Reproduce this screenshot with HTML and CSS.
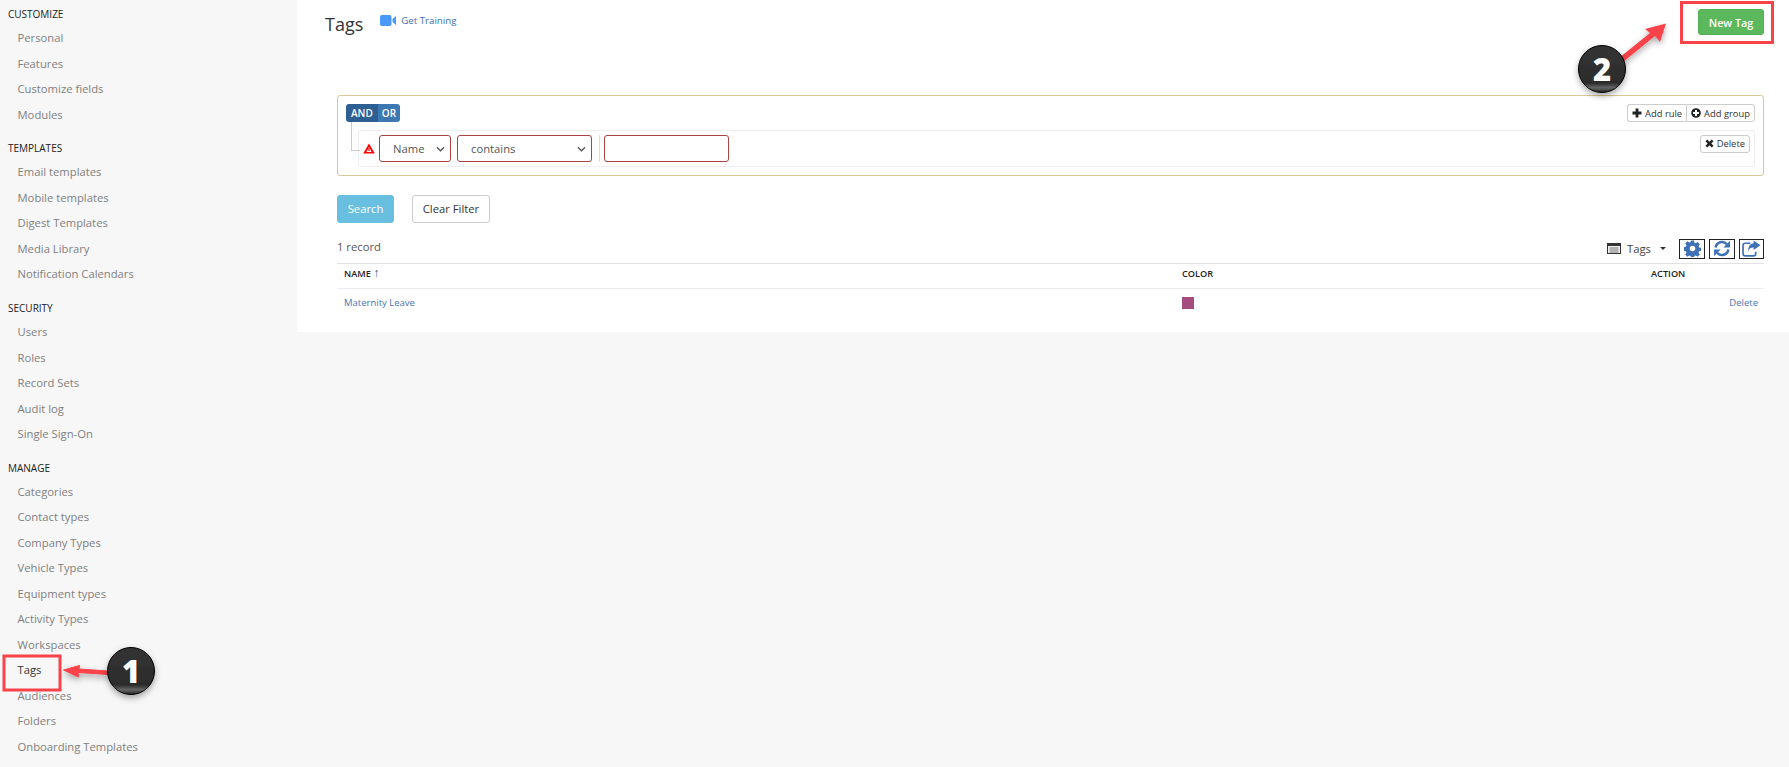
FILE: index.html
```html
<!DOCTYPE html>
<html lang="en">
<head>
<meta charset="utf-8">
<title>Tags</title>
<link rel="stylesheet" href="styles.css">
</head>
<body>
<div class="page">
  <nav class="sidebar">
    <section class="nav-group">
      <h4>CUSTOMIZE</h4>
      <a>Personal</a><a>Features</a><a>Customize fields</a><a>Modules</a>
    </section>
    <section class="nav-group">
      <h4>TEMPLATES</h4>
      <a>Email templates</a><a>Mobile templates</a><a>Digest Templates</a><a>Media Library</a><a>Notification Calendars</a>
    </section>
    <section class="nav-group">
      <h4>SECURITY</h4>
      <a>Users</a><a>Roles</a><a>Record Sets</a><a>Audit log</a><a>Single Sign-On</a>
    </section>
    <section class="nav-group">
      <h4>MANAGE</h4>
      <a>Categories</a><a>Contact types</a><a>Company Types</a><a>Vehicle Types</a><a>Equipment types</a><a>Activity Types</a><a>Workspaces</a><a class="current">Tags</a><a>Audiences</a><a>Folders</a><a>Onboarding Templates</a>
    </section>
  </nav>
  <main class="panel">
    <header class="head">
      <div class="head-left">
        <h1>Tags</h1>
        <a class="training">
          <svg class="cam" viewBox="0 0 16 11" width="16" height="11"><rect x="0" y="0" width="11.5" height="11" rx="2" fill="#4a98f7"/><path d="M12.5 4 L16 1 V10 L12.5 7 Z" fill="#4a98f7"/></svg>
          Get Training
        </a>
      </div>
      <button class="btn-new">New Tag</button>
    </header>

    <div class="filter">
      <div class="filter-top">
        <div class="andor"><span class="and">AND</span><span class="or">OR</span></div>
        <div class="add-group">
          <button><svg viewBox="0 0 10 10" width="10" height="10"><path d="M3.6 0.5h2.8v3.1h3.1v2.8H6.4v3.1H3.6V6.4H0.5V3.6h3.1z" fill="#222"/></svg>Add rule</button>
          <button><svg viewBox="0 0 10 10" width="10" height="10"><circle cx="5" cy="5" r="4.8" fill="#222"/><path d="M4 2h2v2h2v2H6v2H4V6H2V4h2z" fill="#fff"/></svg>Add group</button>
        </div>
      </div>
      <div class="rule">
        <svg class="warn" viewBox="0 0 12 11" width="12" height="11"><path d="M6 0.5 L11.8 10.5 H0.2 Z" fill="#f00"/><path d="M6 4 L8.6 9 H3.4 Z" fill="#fff"/><rect x="5.4" y="5" width="1.2" height="3" fill="#f00"/></svg>
        <div class="select sel-name"><span>Name</span><svg viewBox="0 0 10 6" width="9" height="6"><path d="M1 1 L5 5 L9 1" fill="none" stroke="#555" stroke-width="1.4"/></svg></div>
        <div class="select sel-op"><span>contains</span><svg viewBox="0 0 10 6" width="9" height="6"><path d="M1 1 L5 5 L9 1" fill="none" stroke="#555" stroke-width="1.4"/></svg></div>
        <i class="divider"></i>
        <input class="value" type="text">
        <button class="del"><svg viewBox="0 0 10 10" width="9" height="9"><path d="M2.5 0.5 L5 3 L7.5 0.5 L9.5 2.5 L7 5 L9.5 7.5 L7.5 9.5 L5 7 L2.5 9.5 L0.5 7.5 L3 5 L0.5 2.5 Z" fill="#222"/></svg>Delete</button>
      </div>
    </div>

    <div class="actions">
      <button class="btn-search">Search</button>
      <button class="btn-clear">Clear Filter</button>
    </div>

    <div class="list-bar">
      <span class="count">1 record</span>
      <div class="tools">
        <svg class="view-ico" viewBox="0 0 14 11" width="14" height="11"><rect x="0.5" y="0.5" width="13" height="10" fill="#eee" stroke="#333"/><rect x="0.5" y="0.5" width="13" height="2.5" fill="#333"/><path d="M2.5 5h9M2.5 7h9M2.5 9h9" stroke="#777" stroke-width="1"/></svg>
        <span class="view-name">Tags</span>
        <i class="caret"></i>
        <button class="tool"><svg viewBox="0 0 16 16" width="17" height="17"><path fill="#3f72b5" fill-rule="evenodd" d="M6.6 0.5h2.8l.4 2.1 1.3.55 1.8-1.2 2 2-1.2 1.8.55 1.3 2.1.4v2.8l-2.1.4-.55 1.3 1.2 1.8-2 2-1.8-1.2-1.3.55-.4 2.1H6.6l-.4-2.1-1.3-.55-1.8 1.2-2-2 1.2-1.8-.55-1.3-2.1-.4V6.75l2.1-.4.55-1.3-1.2-1.8 2-2 1.8 1.2 1.3-.55zM8 5.4a2.6 2.6 0 1 0 0 5.2 2.6 2.6 0 0 0 0-5.2z"/></svg></button>
        <button class="tool"><svg viewBox="0 0 16 16" width="18" height="17"><path fill="none" stroke="#3f72b5" stroke-width="2.4" d="M2 7 A6 6 0 0 1 12.5 4"/><path fill="#3f72b5" d="M15.5 0.8V7H9.3z"/><path fill="none" stroke="#3f72b5" stroke-width="2.4" d="M14 9 A6 6 0 0 1 3.5 12"/><path fill="#3f72b5" d="M0.5 15.2V9h6.2z"/></svg></button>
        <button class="tool"><svg viewBox="0 0 18 16" width="19" height="17"><path fill="none" stroke="#3f72b5" stroke-width="1.6" d="M8 3H3a2 2 0 0 0-2 2v8a2 2 0 0 0 2 2h8a2 2 0 0 0 2-2v-2"/><path fill="#3f72b5" d="M11 0.5 L17.5 5 L11 9.5 V7 C8 7 6.5 8.5 6 11 C5.5 6 8 3.2 11 3z"/></svg></button>
      </div>
    </div>

    <table class="grid">
      <thead>
        <tr><th class="c-name">NAME <span class="sort">↑</span></th><th class="c-color">COLOR</th><th class="c-action">ACTION</th></tr>
      </thead>
      <tbody>
        <tr><td><a>Maternity Leave</a></td><td><i class="swatch"></i></td><td class="right"><a>Delete</a></td></tr>
      </tbody>
    </table>
  </main>
</div>

<svg class="notes" width="1789" height="767" viewBox="0 0 1789 767">
  <defs>
    <filter id="sh" x="-30%" y="-30%" width="160%" height="170%"><feDropShadow dx="0" dy="3" stdDeviation="3" flood-color="#000" flood-opacity=".35"/></filter>
    <linearGradient id="ball" x1="0" y1="0" x2="0" y2="1"><stop offset="0" stop-color="#333"/><stop offset=".8" stop-color="#2c2c2c"/><stop offset=".9" stop-color="#666"/><stop offset="1" stop-color="#222"/></linearGradient>
  </defs>
  <rect x="4" y="656" width="56" height="34" fill="none" stroke="#f9424a" stroke-width="3"/>
  <rect x="1681.5" y="2.5" width="91" height="40" fill="none" stroke="#f9424a" stroke-width="3"/>
  <g filter="url(#sh)">
    <path d="M108 674.5 L78 672.5 L78.5 677 L63.5 670 L79.5 665.5 L79 669 L108 671Z" fill="#f9424a" stroke="#f9424a" stroke-width="1"/>
    <path d="M1623 62 L1655 36 L1660 42 L1666 23.5 L1645 29 L1650 33 L1619 58Z" fill="#f9424a"/>
  </g>
  <g filter="url(#sh)">
    <circle cx="131" cy="671" r="23.5" fill="url(#ball)" stroke="#000" stroke-width="1"/>
    <circle cx="1602" cy="69" r="23.5" fill="url(#ball)" stroke="#000" stroke-width="1"/>
  </g>
  <text class="note-num" x="131" y="683">1</text>
  <text class="note-num" x="1602" y="81">2</text>
</svg>
</body>
</html>
```
FILE: styles.css
```css
* { box-sizing: border-box; }
html, body { margin: 0; height: 100%; }
body {
  background: #f7f7f7;
  color: #333;
  font: 11.25px/1.4 "Open Sans", "Noto Sans", sans-serif;
  overflow: hidden;
  position: relative;
}
.page { display: flex; align-items: flex-start; height: 767px; }

/* sidebar */
.sidebar { width: 297px; flex: none; padding: 4px 0 0 8px; }
.nav-group { margin-bottom: 11.3px; }
.nav-group h4 {
  margin: 0;
  font-size: 10px;
  font-weight: 400;
  line-height: 21px;
  color: #222;
}
.nav-group a {
  display: block;
  padding-left: 9.5px;
  line-height: 25.5px;
  font-size: 11.25px;
  color: #808080;
}
.nav-group a.current { color: #333; }

/* main panel */
.panel {
  flex: 1;
  background: #fff;
  height: 332px;
  padding: 9px 25px 0 40px;
}
.head { display: flex; justify-content: space-between; align-items: flex-start; height: 86px; margin-left: -12px; }
.head-left { display: flex; align-items: center; gap: 17px; height: 30px; }
.head h1 { margin: 0; font-size: 18px; font-weight: 400; line-height: 30px; color: #333; }
.training { display: flex; align-items: center; gap: 5px; font-size: 9.7px; color: #3b6fb5; margin-top: -7px; }
.btn-new {
  width: 66px; height: 26px;
  background: #5cb85c;
  border: 1px solid #54ae54;
  border-radius: 3px;
  color: #fff;
  font: 600 10.8px "Open Sans", sans-serif;
  padding: 0;
}

/* filter */
.filter {
  height: 81px;
  border: 1px solid #dcc896;
  border-radius: 3px;
  padding: 8px 8px 0 8px;
}
.filter-top { display: flex; justify-content: space-between; align-items: center; height: 18px; }
.andor { display: flex; height: 18px; border-radius: 3px; overflow: hidden; font-size: 10px; font-weight: 600; color: #fff; line-height: 18px; }
.and { background: #2e5f92; padding: 0 5px; }
.or { background: #3e78b3; padding: 0 4px; }
.add-group { display: flex; height: 18px; }
.add-group button, .del {
  display: flex; align-items: center; gap: 3px;
  height: 18px;
  background: #fff;
  border: 1px solid #ccc;
  padding: 0 4px;
  font: 9.4px "Open Sans", sans-serif;
  color: #333;
  white-space: nowrap;
}
.add-group button:first-child { border-radius: 3px 0 0 3px; border-right: 0; }
.add-group button:last-child { border-radius: 0 3px 3px 0; }
.del { margin-left: auto; border-radius: 3px; margin-top: -10px; }
.rule {
  position: relative;
  display: flex;
  align-items: center;
  height: 37px;
  margin: 8px 0 0 12px;
  padding: 0 4px 0 4px;
  border: 1px solid #eee;
  border-radius: 3px;
}
.rule::before {
  content: "";
  position: absolute;
  left: -8px; top: -9px;
  width: 8px; height: 28px;
  border-left: 1px solid #ccc;
  border-bottom: 1px solid #ccc;
}
.warn { flex: none; margin-right: 4px; }
.select {
  display: flex; align-items: center; justify-content: space-between;
  height: 27px;
  border: 1px solid #a94442;
  border-radius: 3px;
  color: #555;
  background: #fff;
  font-size: 11.25px;
}
.sel-name { width: 72px; padding: 0 5px 0 13px; margin-right: 6px; }
.sel-op { width: 135px; padding: 0 5px 0 13px; }
.divider { width: 1px; height: 27px; background: #ddd; margin: 0 4px 0 7px; }
.value { width: 125px; height: 27px; border: 1px solid #a94442; border-radius: 3px; background: #fff; padding: 0; }

/* actions */
.actions { display: flex; gap: 18px; margin-top: 19px; }
.actions button { height: 28px; border-radius: 3px; font: 11.25px "Open Sans", sans-serif; padding: 0 0 1px; }
.btn-search { width: 57px; background: #68bfdf; border: 1px solid #68bfdf; color: #fff; }
.btn-clear { width: 78px; background: #fff; border: 1px solid #ccc; color: #333; }

/* list */
.list-bar { display: flex; justify-content: space-between; align-items: center; height: 26px; margin-top: 11px; margin-bottom: 3px; }
.count { color: #555; font-size: 11.25px; }
.tools { display: flex; align-items: center; height: 20px; margin-top: 3px; }
.view-ico { margin-right: 6px; }
.view-name { font-size: 11.25px; color: #444; width: 29px; }
.caret { width: 0; height: 0; border: 3px solid transparent; border-top: 3.5px solid #333; border-bottom: 0; margin: 0 13px 0 4px; }
.tool {
  display: flex; align-items: center; justify-content: center;
  width: 26px; height: 20px;
  margin-right: 4px;
  background: #fff;
  border: 1px solid #222;
  padding: 0;
}
.tool:last-child { margin-right: 0; width: 25px; }

.grid { width: 100%; border-collapse: collapse; table-layout: fixed; border-top: 1px solid #e2e2e2; }
.grid th {
  height: 25px;
  padding: 0 7px 4px;
  text-align: left;
  font-size: 9.2px;
  font-weight: 600;
  color: #222;
  border-bottom: 1px solid #eaeef2;
}
.c-name { width: 845px; }
.c-color { width: 469px; padding-left: 0 !important; }
.c-action { padding-left: 0 !important; }
.sort { color: #2f4f7a; font-size: 12px; line-height: 9px; }
.grid td { height: 30px; padding: 0 6px 3px 7px; font-size: 9.5px; color: #4a76b4; }
.grid td:nth-child(2) { padding-left: 0; }
.grid td.right { text-align: right; }
.swatch { display: block; width: 12px; height: 12px; background: #a64b7f; margin-top: 1px; }

/* annotations over the screenshot */
.notes { position: absolute; left: 0; top: 0; pointer-events: none; }
.note-num {
  font: 800 31px "Open Sans", sans-serif;
  fill: #fff;
  text-anchor: middle;
}
```
